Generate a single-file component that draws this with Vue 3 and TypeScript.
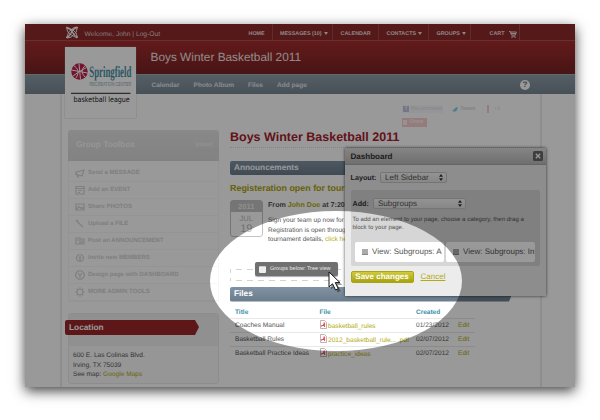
<script setup lang="ts">
interface MenuItem { label: string; caret?: boolean; cart?: boolean; width: number }
interface FileRow { title: string; file: string; created: string }

const menu: MenuItem[] = [
  { label: 'HOME', width: 31.5 },
  { label: 'MESSAGES (10)', caret: true, width: 60.5 },
  { label: 'CALENDAR', width: 46 },
  { label: 'CONTACTS', caret: true, width: 50 },
  { label: 'GROUPS', caret: true, width: 42 },
  { label: 'CART', cart: true, width: 49 },
]
const tabs: string[] = ['Calendar', 'Photo Album', 'Files', 'Add page']
const tools = [
  { label: 'Send a MESSAGE', d: 'M1 4l8-2-2 6-3-1-1 2zM0 6l3 1' },
  { label: 'Add an EVENT', d: 'M1 1.5h8v7.5H1zM1 3.5h8M3 5.5h4M3 7.5h2' },
  { label: 'Share PHOTOS', d: 'M1 2h8v6H1zM1.5 7.5l2.5-3 2 2 1-1 2 2' },
  { label: 'Upload a FILE', d: 'M1 1.5l7 6.5M2 1l1 2' },
  { label: 'Post an ANNOUNCEMENT', d: 'M1 2h4v6H1zM5 3h4v5H5zM2 4h2M6 5h2M6 6.5h2' },
  { label: 'Invite new MEMBERS', d: 'M5 1.5a3.5 3.5 0 1 1-.1 0M5 3v5M3.5 5h3M4 8.5h2' },
  { label: 'Design page with DASHBOARD', d: 'M5 .7a4.3 4.3 0 1 1-.1 0M3 3l2 3 2-3M5 6v2' },
  { label: 'MORE ADMIN TOOLS', d: 'M5 2a3 3 0 1 1-.1 0M5 .3v1.5M5 8.2v1.5M.3 5h1.5M8.2 5h1.5M1.7 1.7l1 1M7.3 7.3l1 1M1.7 8.3l1-1M7.3 2.7l1-1' },
]
const files: FileRow[] = [
  { title: 'Coaches Manual', file: 'basketball_rules', created: '01/23/2012' },
  { title: 'Basketball Rules', file: '2012_basketball_rule... .pdf', created: '02/07/2012' },
  { title: 'Basketball Practice Ideas', file: 'practice_ideas', created: '02/07/2012' },
]
</script>

<template>
  <div class="stage">
    <div class="page">
      <header class="topbar">
        <svg class="mark" viewBox="0 0 14 13" width="14" height="13">
          <g fill="none" stroke="#fff" stroke-width="1.3">
            <path d="M2 2.2c2.500 0 3.500 1 5 3.300s3 5.500 6 5.500M12.300 1.500c-3 .5-4.300 2-5.600 4.500S3.500 11.500 1 11.500" />
            <path d="M1.500 1l1 4.500 4 3.500 5.500 3-.5-4.500L8 4 1.500 1M12.500 1L9 1.500 3.500 6 2 12l4-.8 5-4.700z" stroke-width=".9" />
          </g>
        </svg>
        <span class="welcome">Welcome, John | Log-Out</span>
        <nav class="menu">
          <a v-for="m in menu" :key="m.label" :class="{ cartitem: m.cart }" :style="{ width: m.width + 'px' }">
            <span>{{ m.label }}</span><i v-if="m.caret" class="caret"></i>
            <svg v-if="m.cart" width="8" height="7" viewBox="0 0 8 7"><path d="M0 .5h1.300L2.500 4h4L7.300 1H1.600l.6 1.500H7M2.500 5.200h4" fill="none" stroke="#e6dcdc" stroke-width="1" /><path d="M2.500 6h1v1h-1zM5.500 6h1v1h-1z" fill="#e6dcdc" /></svg>
          </a>
        </nav>
      </header>
      <div class="titlebar">Boys Winter Basketball 2011</div>
      <div class="tabs">
        <a v-for="t in tabs" :key="t">{{ t }}</a>
        <span class="help">?</span>
      </div>

      <div class="logo">
        <svg viewBox="0 0 71 71" width="71" height="71">
          <circle cx="14.500" cy="24.500" r="8.200" fill="#c2224f" />
          <path d="M6.500 23l16 3M14 16.500l1.500 16M8.500 18.500c5 3 6 7 2.500 12.500M20.500 18.500c-5 4-4 8 0 12M8 29l6.500-4.500 7-4" fill="none" stroke="#fff" stroke-width="1" />
          <text transform="translate(24.300 30) scale(.55 1)" class="l-name">Springfield</text>
          <text transform="translate(24.500 38.700) scale(.665 1)" class="l-sub">RECREATION CENTER</text>
          <path d="M6 46.300h59.500" stroke="#222" stroke-width="1" />
          <text transform="translate(8.500 54.700) scale(.85 1)" class="l-league">basketball league</text>
        </svg>
      </div>

      <div class="body">
        <aside>
          <section class="toolbox">
            <h3>Group Toolbox <small>[close]</small></h3>
            <ul>
              <li v-for="t in tools" :key="t.label">
                <svg width="10" height="10" viewBox="0 0 10 10"><path :d="t.d" fill="none" stroke="currentColor" stroke-width="1.200" /></svg>{{ t.label }}
              </li>
            </ul>
          </section>
          <section class="location">
            <div class="lochead"><h3>Location</h3></div>
            <p>600 E. Las Colinas Blvd.<br>Irving, TX 75039<br>See map: <a>Google Maps</a></p>
          </section>
        </aside>

        <main>
          <div class="social">
            <div>
              <span class="fb"><i>f</i>Recommend</span><span class="tw"><svg width="6" height="5" viewBox="0 0 6 5"><path d="M0 3.500C2 4 2 1 4 .5L6 0 5 3C4 5 1 5 0 3.500" fill="#7fd0ec" /></svg>Tweet</span><span class="gp">+1</span>
            </div>
            <span class="share"><i></i>Share</span>
          </div>
          <h1>Boys Winter Basketball 2011</h1>
          <h2>Announcements</h2>
          <h4>Registeration open for tournament</h4>
          <article>
            <div class="date"><b>2011</b><span>JUL</span><strong>19</strong></div>
            <div class="post">
              <h5>From <a>John Doe</a> at 7:20</h5>
              <p>Sign your team up now for the<br>Registration is open through<br>tournament details, <a>click here</a></p>
            </div>
          </article>
          <div class="drop">
            <svg width="282" height="14" viewBox="0 0 282 14"><path d="M.5 1v4M.5 10v3M6 1.500H276M6 12.500H276" fill="none" stroke="#d2d6c9" stroke-width="1" stroke-dasharray="6 5" /></svg>
            <div class="dragged"><i></i>Groups below: Tree view</div>
          </div>
          <h2 class="slant">Files</h2>
          <table>
            <thead><tr><th>Title</th><th>File</th><th>Created</th><th></th></tr></thead>
            <tbody>
              <tr v-for="f in files" :key="f.title">
                <td>{{ f.title }}</td>
                <td><svg width="7" height="9" viewBox="0 0 7 9"><path d="M.5.5h4l2 2v6h-6z" fill="#fff" stroke="#b0a0a0" stroke-width=".8" /><path d="M1 6.300c2-.5 3-2 3.200-4M1.500 5.500h3.300M4.600 3v4" fill="none" stroke="#ea4a58" stroke-width="1" /></svg><a>{{ f.file }}</a></td>
                <td>{{ f.created }}</td>
                <td><a>Edit</a></td>
              </tr>
            </tbody>
          </table>
        </main>
      </div>

      <div class="dialog">
        <div class="dhead">Dashboard
          <svg width="10" height="10" viewBox="0 0 10 10"><rect width="10" height="10" rx="1.500" fill="#666" /><path d="M2.800 2.800l4.400 4.400M7.200 2.800L2.800 7.200" stroke="#fff" stroke-width="1.300" /></svg>
        </div>
        <div class="dbody">
          <div class="field"><label>Layout:</label><span class="select s1">Left Sidebar<svg width="4" height="7" viewBox="0 0 4 7"><path d="M0 2.700L2 0l2 2.700zM0 4.300L2 7l2-2.700z" fill="#333" /></svg></span></div>
          <div class="panel">
            <div class="field"><label>Add:</label><span class="select s2">Subgroups<svg width="4" height="7" viewBox="0 0 4 7"><path d="M0 2.700L2 0l2 2.700zM0 4.300L2 7l2-2.700z" fill="#333" /></svg></span></div>
            <p>To add an element to your page, choose a category, then drag a<br>block to your page.</p>
            <div class="blocks">
              <div><i></i><span>View: Subgroups: A</span></div>
              <div><i></i><span>View: Subgroups: In</span></div>
            </div>
          </div>
          <div class="actions"><button>Save changes</button><a>Cancel</a></div>
        </div>
      </div>

      <svg class="shade" width="550" height="363" viewBox="0 0 550 363">
        <path fill-rule="evenodd" fill="#000" fill-opacity=".4" d="M0 0H550V363H0zM185 257a126 70 0 0 0 252 0a126 70 0 0 0-252 0z" />
      </svg>
      <svg class="cursor" width="18" height="24" viewBox="0 0 18 24">
        <path d="M2 2v15l3.500-3.200 3 6.200 3-1.400-3-6H13z" fill="#000" opacity=".4" transform="translate(1.200 1.500)" />
        <path d="M1 1v15l3.500-3.200 3 6.200 2.800-1.400-3-6H12z" fill="#fff" stroke="#111" stroke-width="1" />
      </svg>
    </div>
  </div>
</template>

<style>
body { margin: 0; background: #fff; overflow: hidden; }
</style>

<style scoped>
* { box-sizing: border-box; }
h1, h2, h3, h4, h5, p, ul { margin: 0; padding: 0; }
a { color: #b3ab12; }
.stage { width: 600px; height: 420px; padding: 24px 25px; overflow: hidden; font-family: "Liberation Sans", Arial, sans-serif; font-size: 6.6px; color: #555; text-rendering: geometricPrecision; }
.page { position: relative; width: 550px; height: 363px; background: #fff; box-shadow: 0 4px 12px rgba(0, 0, 0, .75); }
svg { flex: none; }

.topbar { display: flex; height: 17px; padding-left: 40px; background: #8e2a2b; border-bottom: 1px solid #a65353; color: #e0d0d0; }
.mark { margin: 1.500px 5.500px 0 0; }
.welcome { width: 156.500px; padding-top: 2px; line-height: 17px; font-size: 6.700px; white-space: nowrap; flex: none; }
.menu { display: flex; }
.menu a { display: flex; align-items: center; flex: none; padding: 5px 0 0 7.500px; border-right: 1px solid #a04a4a; color: #eadede; font-size: 5.400px; font-weight: bold; line-height: 11px; white-space: nowrap; }
.menu .cartitem { padding-left: 18.500px; }
.menu .cartitem svg { margin-left: 5px; }
.caret { width: 0; height: 0; margin: 0 0 3px 2px; border: 2.500px solid transparent; border-top: 3px solid #eadede; border-bottom: 0; }
.titlebar { height: 33px; padding-left: 125.500px; background: linear-gradient(#a52c2d, #782324); color: #f0e6e6; font-size: 11.850px; line-height: 32px; }
.tabs { display: flex; gap: 14px; height: 20px; padding: 1px 45px 0 126.500px; background: linear-gradient(#8c9ea9, #788690); border-top: 1px solid #a3adb3; font-size: 6.550px; font-weight: bold; line-height: 20px; }
.tabs a { color: #e2e8ec; }
.help { width: 10px; height: 10px; margin: 3.500px 0 0 auto; border-radius: 50%; background: #fff; color: #667; font-size: 8px; line-height: 10px; text-align: center; }

.logo { position: absolute; left: 40px; top: 23px; width: 71px; height: 71px; background: #fff; box-shadow: 0 0 1px #999; }
.logo svg { display: block; }
.l-name { font: bold 16px "Liberation Serif", serif; fill: #4590a4; }
.l-sub { font: 5.800px "Liberation Sans", sans-serif; fill: #8aacb5; }
.l-league { font: 7.500px "DejaVu Sans", sans-serif; fill: #222; }

.body { display: flex; width: 482px; height: 293px; margin-left: 34.500px; padding-left: 8.500px; border: solid #ececec; border-width: 0 2px; }
aside { width: 151px; margin: 36px 11px 0 -2px; flex: none; }
.toolbox { height: 172px; border: 1px solid #f7f7f7; border-radius: 4px 4px 0 0; }
.toolbox h3 { display: flex; justify-content: space-between; height: 31px; margin: -1px -1px 4px; width: 151px; padding: 0 6px 0 8px; border-radius: 3px 3px 0 0; background: linear-gradient(#e4e4e4, #d9d9d9); color: #fafafa; font-size: 8.300px; line-height: 29px; }
.toolbox small { font-size: 6px; font-weight: normal; line-height: 31px; }
.toolbox ul { list-style: none; }
.toolbox li { display: flex; align-items: center; gap: 3px; height: 17px; padding-left: 6px; border-bottom: 1px solid #f7f7f7; color: #d4d4d4; font-size: 6.050px; font-weight: bold; }
.location { height: 71px; margin-top: 11px; border: 1px solid #ececec; border-radius: 3px; background: #fafafa; }
.lochead { height: 32px; padding-top: 6px; background: #f0f0f0; }
.location h3 { width: 134px; height: 15px; margin-left: -4px; padding-left: 4px; background: #9c2728; clip-path: polygon(0 0, 130px 0, 134px 7px, 130px 15px, 0 15px); color: #fff; font-size: 8.300px; line-height: 15px; border-radius: 2px 0 0 2px; }
.location p { padding: 5px 0 0 4px; font-size: 6.600px; line-height: 9.500px; }

main { width: 312px; flex: none; }
.social { height: 36px; padding: 11px 0 0 172px; font-size: 5.500px; line-height: 8px; color: #dce0ec; }
.social div { display: flex; height: 12.500px; }
.social span { display: flex; align-items: center; gap: 2px; height: 8px; }
.social i { width: 6px; height: 6px; background: #bcc7de; color: #fff; font-style: normal; line-height: 7px; text-align: center; margin-left: 1px; }
.fb { width: 41px; margin-right: 9px; background: #f8f9fc; }
.tw { width: 26px; margin-right: 9px; font-weight: bold; color: #d5dbe0; }
.gp { width: 17px; padding-left: 5px; border-left: 2px solid #f4cfcf; }
.social .share { width: 25px; height: 9px; background: #f9cdcd; color: #fff; }
.social .share i { background: #fff2f2; width: 4px; height: 5px; }
h1 { height: 17.500px; border-bottom: 1px dotted #ddd; color: #a6202b; font-size: 12.500px; line-height: 14px; white-space: nowrap; }
h2 { width: 282px; height: 14.500px; margin-top: 13px; padding-left: 4px; border-radius: 2px 0 0 2px; background: linear-gradient(#8193a3, #6a7c8c); color: #fff; font-size: 8.250px; line-height: 14.500px; }
h4 { margin-top: 7px; color: #aca40e; font-size: 8.920px; line-height: 12px; }
article { display: flex; height: 51px; margin-top: 6px; gap: 5.500px; }
.date { display: flex; flex-direction: column; width: 32.500px; height: 37px; border: 1.500px solid #c4c4c4; border-radius: 3px; text-align: center; color: #bbb; font-size: 7.500px; line-height: 9px; }
.date b { height: 11px; background: #c4c4c4; color: #eee; line-height: 11px; }
.date span { padding-top: 2px; }
.date strong { font-size: 11px; line-height: 12px; font-weight: normal; }
h5 { font-size: 7.140px; line-height: 10px; white-space: nowrap; color: #555; }
.post p { margin-top: 6px; font-size: 6.500px; line-height: 9.500px; white-space: nowrap; }
.drop { position: relative; height: 25px; margin-top: 11px; padding-top: 6px; }
.drop svg { display: block; }
.dragged { position: absolute; left: 25px; top: 0; display: flex; align-items: center; gap: 4px; width: 83px; height: 14px; padding-left: 4px; border-radius: 2px; background: #707070; box-shadow: 0 1px 1px #aaa; color: #e8e8e8; font-size: 5.500px; white-space: nowrap; }
.dragged i { width: 7px; height: 7px; background: #eee; border-top: 1px solid #ccc; border-radius: 1px; }
.slant { width: 285px; margin-top: 0; clip-path: polygon(0 0, 285px 0, 279px 100%, 0 100%); }
table { width: 245px; margin-top: 6px; border-collapse: collapse; table-layout: fixed; font-size: 6.600px; line-height: 9px; }
th, td { padding: 0; text-align: left; white-space: nowrap; height: 14px; border-bottom: 1px solid #e8e8e8; vertical-align: middle; }
tr:last-child td { border-bottom: 0; }
thead th { height: 11px; border-bottom: 1px solid #e8e8e8; color: #3b8fa8; font-size: 6.500px; }
th:first-child, td:first-child { width: 89.500px; padding-left: 5px; }
th:nth-child(2) { width: 96.500px; }
th:nth-child(3) { width: 42px; }
td svg { margin-right: 1.500px; vertical-align: -1px; }

.dialog { position: absolute; left: 320px; top: 123.500px; width: 201px; height: 148px; background: #ececec; box-shadow: 0 0 3px rgba(0, 0, 0, .7); color: #333; }
.dhead { display: flex; justify-content: space-between; height: 17px; padding: 3px 3px 0 5.500px; background: linear-gradient(#dedede, #b9b9b9); border-bottom: 1px solid #aaa; font-size: 8.050px; font-weight: bold; line-height: 12px; }
.dbody { padding: 7px 6px 0 5.500px; }
.field { display: flex; align-items: center; height: 12px; }
.field label { font-size: 7.200px; font-weight: bold; }
.select { display: flex; align-items: center; justify-content: space-between; height: 11px; padding: 0 3px 0 4px; border: 1px solid #c3c3c3; border-radius: 2px; background: linear-gradient(#f5f5f5, #e2e2e2); color: #555; font-size: 8.100px; line-height: 9px; }
.s1 { width: 67.500px; margin-left: 3.500px; }
.s2 { width: 93px; margin-left: 4px; }
.panel { height: 76px; margin-top: 6.500px; padding: 7.500px 2px 0; border-radius: 2px; background: #d6d6d6; }
.panel p { margin-top: 6px; font-size: 6.050px; line-height: 8px; white-space: nowrap; color: #555; }
.blocks { display: flex; gap: 2px; margin: 10px 2px 0; }
.blocks div { display: flex; align-items: center; width: 89px; height: 20px; padding-left: 7px; overflow: hidden; border-radius: 2px; background: #fff; color: #555; font-size: 8px; white-space: nowrap; }
.blocks i { flex: none; width: 6px; height: 6px; margin: 1px 4.500px 0 0; background: #aaa; border-bottom: 1px solid #888; }
.actions { display: flex; align-items: center; gap: 7px; margin-top: 4.500px; }
button { width: 63px; height: 12.500px; padding: 0; border: 1px solid #a9a51b; border-radius: 2px; background: linear-gradient(#d0ca3a, #aaa310); color: #fff; font: bold 8px "Liberation Sans", sans-serif; line-height: 10px; white-space: nowrap; text-rendering: inherit; }
.actions a { font-size: 8px; text-decoration: underline; }

.shade { position: absolute; left: 0; top: 0; }
.cursor { position: absolute; left: 303px; top: 246.500px; }
</style>
